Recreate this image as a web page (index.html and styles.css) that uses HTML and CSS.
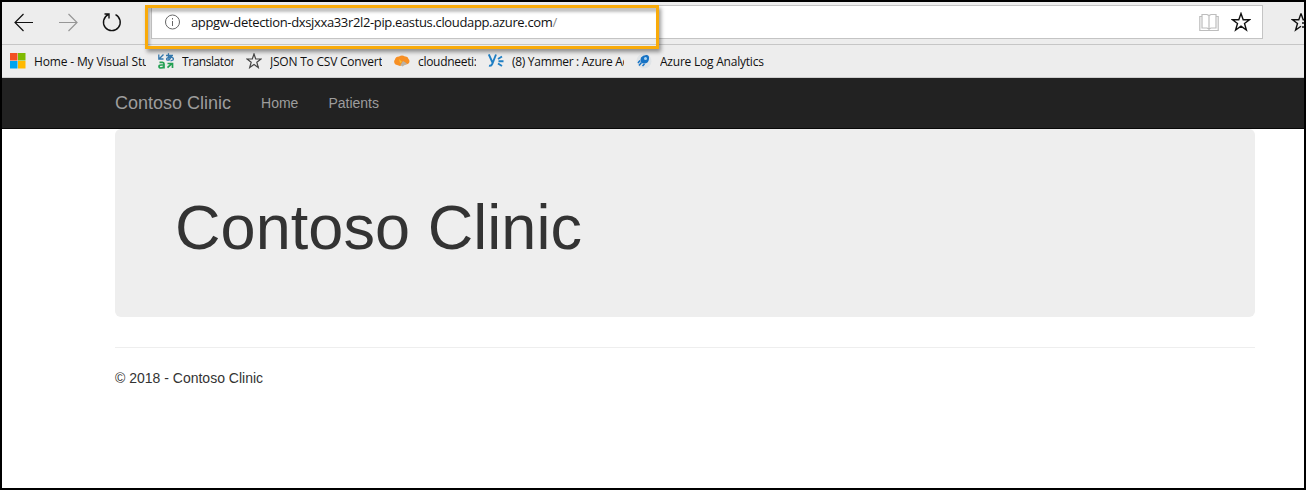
FILE: index.html
```html
<!DOCTYPE html>
<html lang="en">
<head>
<meta charset="utf-8">
<title>Contoso Clinic</title>
<link rel="stylesheet" href="styles.css">
</head>
<body>
<div class="window">
  <div class="toolbar">
    <svg class="nav-icon" width="20" height="20" viewBox="0 0 20 20"><path d="M19 10.500H1M9.500 2L1 10.500L9.500 19"/></svg>
    <svg class="nav-icon forward" width="20" height="20" viewBox="0 0 20 20"><path d="M1 10.500H19M10.500 2L19 10.500L10.500 19"/></svg>
    <svg class="nav-icon reload" width="20" height="20" viewBox="0 0 20 20"><path d="M13.500 2.700A8.400 8.400 0 1 1 6.200 2.700M2.500 2H7V6.500"/></svg>
    <div class="address">
      <svg class="info" width="16" height="16" viewBox="0 0 16 16"><circle cx="7.500" cy="8" r="7"/><path d="M7.500 7V12M7.500 4V5.500"/></svg>
      <span class="url">appgw-detection-dxsjxxa33r2l2-pip.eastus.cloudapp.azure.com<i>/</i></span>
      <svg class="book" width="20" height="19" viewBox="0 0 20 19"><path d="M3 1.500H8L10 2.500L12 1.500H17V15H12L10 16L8 15H3ZM10 2.500V17M3 3.500H.8V17.500H19.200V3.500H17"/></svg>
      <svg class="star" width="20" height="20" viewBox="0 0 20 20"><path d="M10 1.500L12.200 7.700H18.500L13.500 11.500L15.400 18L10 14.200L4.600 18L6.500 11.500L1.500 7.700H7.800Z"/></svg>
    </div>
    <svg class="star hub" width="20" height="20" viewBox="0 0 20 20"><path d="M10 1.500L12.200 7.700H18.500M10 1.500L7.800 7.700H1.500L6.500 11.500L4.600 18L10 14.200M11 11H18M11 15H18"/></svg>
    <div class="highlight"></div>
  </div>
  <div class="favorites">
    <div class="fav"><svg width="16" height="16" viewBox="0 0 16 16"><path fill="#f25022" d="M0 0h7.500v7.500H0z"/><path fill="#7fba00" d="M8 0h7.500v7.500H8z"/><path fill="#00a4ef" d="M0 8h7.500v7.500H0z"/><path fill="#ffb900" d="M8 8h7.500v7.500H8z"/></svg><span class="w-home">Home - My Visual Stu</span></div>
    <div class="fav"><svg width="16" height="16" viewBox="0 0 16 16" fill="none"><path stroke="#3478ad" stroke-width="1.300" d="M5.500 1.500L1.500 5.500M.8 1.500V6H5.500M8 2.500H15M10.500 .3Q10 5 11.500 7.500M13.500 3Q11.500 8 9 7Q7.500 5 12 4Q16.500 4.500 15 7L12.500 8"/><path stroke="#24a053" stroke-width="1.700" d="M1.500 9.300H4.500Q6 9.500 6 11V15.500M6 12H3Q1 12 1 13.500T3 15Q5 15 6 13.500"/><path stroke="#24a053" stroke-width="1.700" d="M9.500 14.700L14 10.300M9.500 10.500H14.500V15"/></svg><span class="w-trans">Translator</span></div>
    <div class="fav"><svg width="16" height="16" viewBox="0 0 16 16" fill="none"><path stroke="#444" stroke-width="1.200" d="M8 1L9.700 6H15L10.800 9.200L12.300 14.500L8 11.400L3.700 14.500L5.200 9.200L1 6H6.300Z"/></svg><span class="w-json">JSON To CSV Convert</span></div>
    <div class="fav"><svg width="16" height="16" viewBox="0 0 16 16"><path fill="#f78f24" d="M1.500 11.500Q-1 9 1 6.500Q1.500 3.500 5 3.500Q8 1.500 11 3.500Q14 3 14.500 6Q16.500 8 14.500 10.500Q13 12 9 11.500L6 13Z"/><path fill="#b9b2a6" d="M6.500 12L9 8L13 10.500L8.500 13.500Z"/><path fill="#f4c52c" d="M5 6L8 9L6 10Z"/></svg><span class="w-cloud">cloudneeti:</span></div>
    <div class="fav"><svg width="16" height="16" viewBox="0 0 16 16" fill="none" stroke="#1f7fc4" stroke-width="1.900"><path d="M.8 1.500L4.500 9.500M8 1.500L4.300 10.800Q3.300 13.300 1 12.700M10 6L14 3.500M10.500 8.300H15.500M10 10.500L14 13"/></svg><span class="w-yam">(8) Yammer : Azure Ad</span></div>
    <div class="fav"><svg width="16" height="16" viewBox="0 0 16 16"><circle cx="8" cy="8" r="7.500" fill="#e0e4e7"/><path fill="#1673c5" d="M5 4.500Q7 1.700 11 2Q13.500 2.500 13 6Q12.500 10 9 10.500Q4 11 4.500 6.500Z"/><path fill="none" stroke="#1673c5" stroke-width="1.500" d="M4 7.500L2 10M5.500 9.500L3 12.500M8.500 11L6.500 13"/><circle cx="9.500" cy="5.500" r="1.500" fill="#a9d5f3"/></svg><span class="w-log">Azure Log Analytics</span></div>
  </div>
  <nav class="navbar">
    <a class="brand">Contoso Clinic</a><a class="link">Home</a><a class="link">Patients</a>
  </nav>
  <main class="container">
    <section class="jumbotron"><h1>Contoso Clinic</h1></section>
    <hr>
    <footer>© 2018 - Contoso Clinic</footer>
  </main>
</div>
</body>
</html>
```
FILE: styles.css
```css
* { box-sizing: border-box; }
body { margin: 0; background: #fff; font-family: "Liberation Sans", Arial, sans-serif; }
svg { flex: none; display: block; }
.window { width: 1306px; height: 490px; border: 2px solid #000; overflow: hidden; }
.toolbar { position: relative; display: flex; align-items: center; height: 43px; padding: 0 0 3px 12px; background: #ededed; border-bottom: 1px solid #c6c6c6; }
.nav-icon { fill: none; stroke: #111; stroke-width: 1.2; margin-right: 24px; }
.forward { stroke: #969696; }
.reload { stroke-width: 1.4; margin-right: 29px; }
.address { display: flex; align-items: center; width: 1112px; height: 34px; margin-top: 1px; padding: 0 11px 0 13px; background: #fff; border: 1px solid #c4c4c4; flex: none; }
.info { fill: none; stroke: #666; stroke-width: 1; }
.url { flex: 1; margin-left: 10px; font: 13px/18px "Open Sans", sans-serif; color: #111; letter-spacing: -0.35px; white-space: nowrap; }
.url i { color: #888; font-style: normal; }
.book { fill: none; stroke: #bdbdbd; stroke-width: 1.2; margin-right: 12px; }
.star { fill: none; stroke: #111; stroke-width: 1.4; }
.hub { margin-left: 28px; }
.highlight { position: absolute; z-index: 2; left: 143px; top: 3px; width: 514px; height: 44px; border: 3px solid #f9ab0a; box-shadow: 2px 3px 4px rgba(0,0,0,.4), inset 2px 4px 3px rgba(0,0,0,.25); }
.favorites { display: flex; align-items: center; gap: 12px; height: 33px; padding: 0 8px; background: #ededed; border-bottom: 1px solid #cfcfcf; }
.fav { display: flex; align-items: center; gap: 8px; }
.fav span { padding-top: 2px; overflow: hidden; white-space: nowrap; font: 12px/18px "Open Sans", sans-serif; color: #111; letter-spacing: -0.22px; }
.fav .w-home { letter-spacing: -0.15px; }
.fav .w-trans { letter-spacing: -0.45px; }
.fav .w-cloud { letter-spacing: -0.3px; }
.fav .w-yam { letter-spacing: -0.3px; }
.w-home, .w-json, .w-yam { width: 112px; }
.w-trans { width: 52px; }
.w-cloud { width: 58px; }
.w-log { width: 106px; }
.navbar { display: flex; align-items: center; height: 51px; padding-left: 113px; background: #222; border-bottom: 1px solid #080808; color: #9d9d9d; }
.brand { font-size: 18px; line-height: 20px; margin-right: 15px; }
.link { padding: 0 15px; font-size: 14px; line-height: 20px; }
.container { width: 1140px; margin-left: 113px; color: #333; }
.jumbotron { height: 188px; padding: 64px 60px; background: #eee; border-radius: 6px; }
h1 { margin: 0; font-size: 63px; line-height: 69px; font-weight: 500; letter-spacing: 0.06px; }
hr { margin: 30px 0 20px; border: 0; border-top: 1px solid #eee; }
footer { font-size: 14px; line-height: 20px; }
```
